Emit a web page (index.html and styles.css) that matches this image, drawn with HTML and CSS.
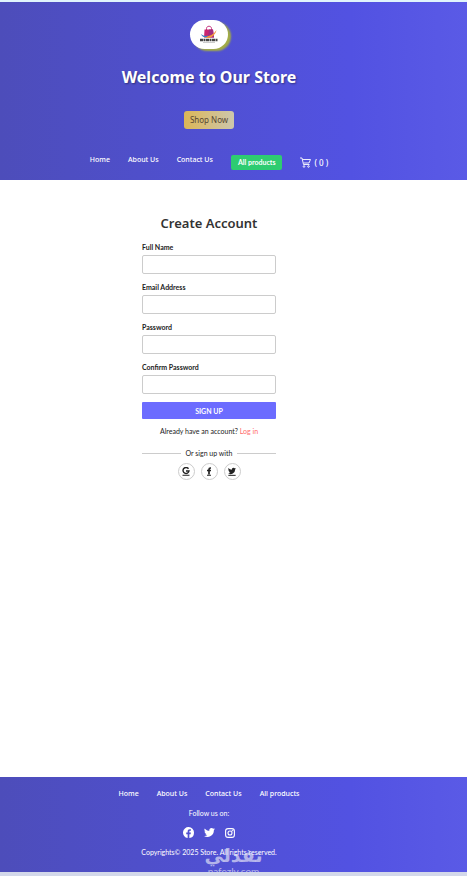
FILE: index.html
```html
<!DOCTYPE html>
<html lang="en">
<head>
    <meta charset="UTF-8">
    <meta name="viewport" content="width=device-width, initial-scale=1.0">
    <title>Create Account</title>
    <link rel="stylesheet" href="styles.css">
</head>
<body>

    <!-- Header -->
    <header class="header">
        <div class="logo">
            <svg width="20" height="20" viewBox="0 0 40 40" role="img" aria-label="Shopping">
                <path d="M15 10V7c0-6 10-6 10 0v3" fill="none" stroke="#c2327c" stroke-width="2"/>
                <path d="M11 9h17l2 16H10z" fill="#c9256f"/>
                <path d="M20 9h8l2 16H18z" fill="#a02d80"/>
                <path d="M5 19c5 6 20 6 30-9-3 14-20 23-30 9z" fill="#f59a3c"/>
                <path d="M4 18c4 4 9 5 15 3-5 6-12 4-15-3z" fill="#2f7fd0"/>
                <path d="M2 30h36" stroke="#444" stroke-width="5" stroke-dasharray="6 1 4 1"/>
                <path d="M8 35h24" stroke="#ccc" stroke-width="2"/>
            </svg>
        </div>
        <h1>Welcome to Our Store</h1>
        <a href="#" class="shop-btn">Shop Now</a>
        <nav class="nav">
            <a href="#">Home</a>
            <a href="#">About Us</a>
            <a href="#">Contact Us</a>
            <a href="#" class="products-btn">All products</a>
            <a href="#" class="cart">
                <svg width="11" height="11" viewBox="0 0 22 22" fill="none" stroke="currentColor" stroke-width="1.8">
                    <path d="M0 2h4l3 13h12M5 5h16l-3 7H7"/>
                    <circle cx="8" cy="19" r="1.6"/>
                    <circle cx="17" cy="19" r="1.6"/>
                </svg>
                <span>( 0 )</span>
            </a>
        </nav>
    </header>

    <!-- Sign up form -->
    <main class="main">
        <form class="signup">
            <h2>Create Account</h2>
            <div class="field">
                <label for="name">Full Name</label>
                <input type="text" id="name">
            </div>
            <div class="field">
                <label for="email">Email Address</label>
                <input type="email" id="email">
            </div>
            <div class="field">
                <label for="password">Password</label>
                <input type="password" id="password">
            </div>
            <div class="field">
                <label for="confirm">Confirm Password</label>
                <input type="password" id="confirm">
            </div>
            <button type="submit" class="signup-btn">SIGN UP</button>
            <p class="login">Already have an account? <a href="#">Log in</a></p>
            <div class="divider">Or sign up with</div>
            <div class="social-login">
                <a href="#" aria-label="Google">
                    <svg width="8" height="9" viewBox="0 0 16 18">
                        <path d="M13 3.5A6 6 0 1 0 14 8H8" fill="none" stroke="currentColor" stroke-width="2.8"/>
                        <path d="M1 16.5h14" stroke="currentColor" stroke-width="2"/>
                    </svg>
                </a>
                <a href="#" aria-label="Facebook">
                    <svg width="8" height="9" viewBox="0 0 16 18">
                        <path d="M12 2h-1c-2 0-3 1-3 3v10M4 7h8" fill="none" stroke="currentColor" stroke-width="3.4"/>
                        <path d="M4 16.5h8" stroke="currentColor" stroke-width="2"/>
                    </svg>
                </a>
                <a href="#" aria-label="Twitter">
                    <svg width="8" height="9" viewBox="0 0 24 27">
                        <path d="M23.950 4.600a10 10 0 0 1-2.800.800 4.900 4.900 0 0 0 2.100-2.700c-1 .600-2 1-3.100 1.200a4.900 4.900 0 0 0-8.400 4.500C7.700 8.200 4.100 6.200 1.700 3.200a4.900 4.900 0 0 0 1.500 6.600 4.900 4.900 0 0 1-2.200-.600 4.900 4.900 0 0 0 3.900 4.900 4.900 4.900 0 0 1-2.200.1 4.900 4.900 0 0 0 4.600 3.400A9.900 9.900 0 0 1 0 19.500 14 14 0 0 0 21.500 7.100a10 10 0 0 0 2.450-2.500z" fill="currentColor"/>
                        <path d="M1 25h22" stroke="currentColor" stroke-width="3"/>
                    </svg>
                </a>
            </div>
        </form>
    </main>

    <!-- Footer -->
    <footer class="footer">
        <nav class="nav">
            <a href="#">Home</a>
            <a href="#">About Us</a>
            <a href="#">Contact Us</a>
            <a href="#">All products</a>
        </nav>
        <p>Follow us on:</p>
        <div class="social">
            <a href="#" aria-label="Facebook">
                <svg width="11" height="11" viewBox="0 0 16 16" fill="currentColor">
                    <path d="M16 8.050A8 8 0 1 0 6.750 16v-5.600H4.700V8.050h2.050V6.300c0-2 1.200-3.150 3-3.150.9 0 1.800.16 1.800.16v2h-1c-1 0-1.300.6-1.300 1.250v1.500h2.200l-.350 2.350H9.250V16A8 8 0 0 0 16 8.050z"/>
                </svg>
            </a>
            <a href="#" aria-label="Twitter">
                <svg width="11" height="11" viewBox="0 0 24 24" fill="currentColor">
                    <path d="M23.950 4.600a10 10 0 0 1-2.800.800 4.900 4.900 0 0 0 2.100-2.700c-1 .600-2 1-3.100 1.200a4.900 4.900 0 0 0-8.400 4.500C7.700 8.200 4.100 6.200 1.700 3.200a4.900 4.900 0 0 0 1.500 6.600 4.900 4.900 0 0 1-2.200-.600 4.900 4.900 0 0 0 3.900 4.900 4.900 4.900 0 0 1-2.200.1 4.900 4.900 0 0 0 4.600 3.400A9.900 9.900 0 0 1 0 19.500 14 14 0 0 0 21.500 7.100a10 10 0 0 0 2.450-2.500z"/>
                </svg>
            </a>
            <a href="#" aria-label="Instagram">
                <svg width="10" height="10" viewBox="0 0 20 20" fill="none" stroke="currentColor" stroke-width="2.2">
                    <rect x="1.2" y="1.2" width="17.6" height="17.6" rx="5"/>
                    <circle cx="10" cy="10" r="4"/>
                    <circle cx="15" cy="5" r="0.6"/>
                </svg>
            </a>
        </div>
        <p>Copyrights© 2025 Store. All rights reserved.</p>
        <div class="watermark">
            <span class="watermark-name" lang="ar">نفذلي</span>
            <span class="watermark-site">nafezly.com</span>
        </div>
    </footer>

</body>
</html>
```

FILE: styles.css
```css
/* Global Styles */
* {
    box-sizing: border-box;
}

body {
    display: flex;
    flex-direction: column;
    min-height: 100vh;
    margin: 0;
    border-top: 2px solid #e0f4fc;
    border-bottom: 4px solid #d3d8ea;
    font-family: Lato, "Noto Sans", sans-serif;
    font-size: 7px;
    line-height: 10px;
    color: #222;
    background-color: #fff;
}

a {
    color: inherit;
    text-decoration: none;
}

h1, h2, p {
    margin: 0;
}

h1, h2, .shop-btn, .nav {
    font-family: "Noto Sans", "Open Sans", sans-serif;
}

svg {
    display: block;
}

/* Header and Footer */
.header,
.footer {
    display: flex;
    flex-direction: column;
    align-items: center;
    padding-right: 49px;
    color: #fff;
    background: linear-gradient(to right, #4d4dba, #5252e2 75%, #5a5ae6);
}

.header {
    padding-top: 18px;
    padding-bottom: 10px;
}

.logo {
    display: flex;
    align-items: center;
    justify-content: center;
    width: 38px;
    height: 29px;
    border-radius: 15px;
    background-color: #fff;
    box-shadow: 3px 2px 2px #a3ad45;
}

h1 {
    margin-top: 16px;
    font-size: 16px;
    line-height: 24px;
    text-shadow: 1px 1px 2px rgba(0, 0, 0, 0.4);
}

.shop-btn {
    margin-top: 22px;
    padding: 0 6px;
    border-radius: 3px;
    font-size: 8px;
    line-height: 18px;
    color: #554632;
    background: linear-gradient(to right, #dcb657, #cdc6ac);
}

.nav {
    display: flex;
    gap: 18px;
    font-weight: 500;
}

.header .nav {
    margin-top: 26px;
}

.products-btn {
    padding: 0 7px;
    border-radius: 2px;
    font-family: Lato, "Noto Sans", sans-serif;
    font-weight: bold;
    line-height: 15px;
    background-color: #2ecc71;
}

.cart {
    display: flex;
    align-items: center;
    gap: 3px;
    font-size: 8px;
}

/* Sign Up Form */
.main {
    flex: 1;
    padding: 35px 49px 35px 0;
}

.signup {
    display: flex;
    flex-direction: column;
    width: 134px;
    margin: 0 auto;
}

h2 {
    margin-bottom: 10px;
    font-size: 13px;
    font-weight: 600;
    line-height: 17px;
    text-align: center;
    color: #333;
}

.field {
    display: flex;
    flex-direction: column;
    gap: 3px;
    margin-bottom: 8px;
}

.field label {
    font-weight: bold;
}

.field input {
    width: 100%;
    height: 19px;
    padding: 0 4px;
    border: 1px solid #ccc;
    border-radius: 2px;
    font: inherit;
}

.signup-btn {
    height: 17px;
    padding: 0;
    border: none;
    border-radius: 1px;
    font: inherit;
    font-weight: bold;
    color: #fff;
    background-color: #6c6cff;
}

.login {
    margin-top: 7px;
    text-align: center;
}

.login a {
    color: #ff6b6b;
}

.divider {
    display: flex;
    align-items: center;
    gap: 5px;
    margin-top: 12px;
    white-space: nowrap;
}

.divider::before,
.divider::after {
    content: "";
    flex: 1;
    height: 1px;
    background-color: #ccc;
}

.social-login {
    display: flex;
    justify-content: center;
    gap: 6px;
    margin-top: 5px;
}

.social-login a {
    display: flex;
    align-items: center;
    justify-content: center;
    width: 17px;
    height: 17px;
    border: 1px solid #ccc;
    border-radius: 50%;
}

/* Footer */
.footer {
    position: relative;
    gap: 9px;
    padding-top: 12px;
    padding-bottom: 15px;
    overflow: hidden;
}

.social {
    display: flex;
    align-items: center;
    gap: 10px;
}

/* Watermark over the footer */
.watermark {
    position: absolute;
    bottom: -5px;
    left: 50%;
    display: flex;
    flex-direction: column;
    align-items: center;
    width: 56px;
    margin-left: -28px;
    color: rgba(225, 225, 245, 0.7);
}

.watermark-name {
    font-family: "DejaVu Sans", sans-serif;
    font-size: 19px;
    font-weight: bold;
    line-height: 20px;
}

.watermark-site {
    font-size: 10px;
    line-height: 12px;
}
```
